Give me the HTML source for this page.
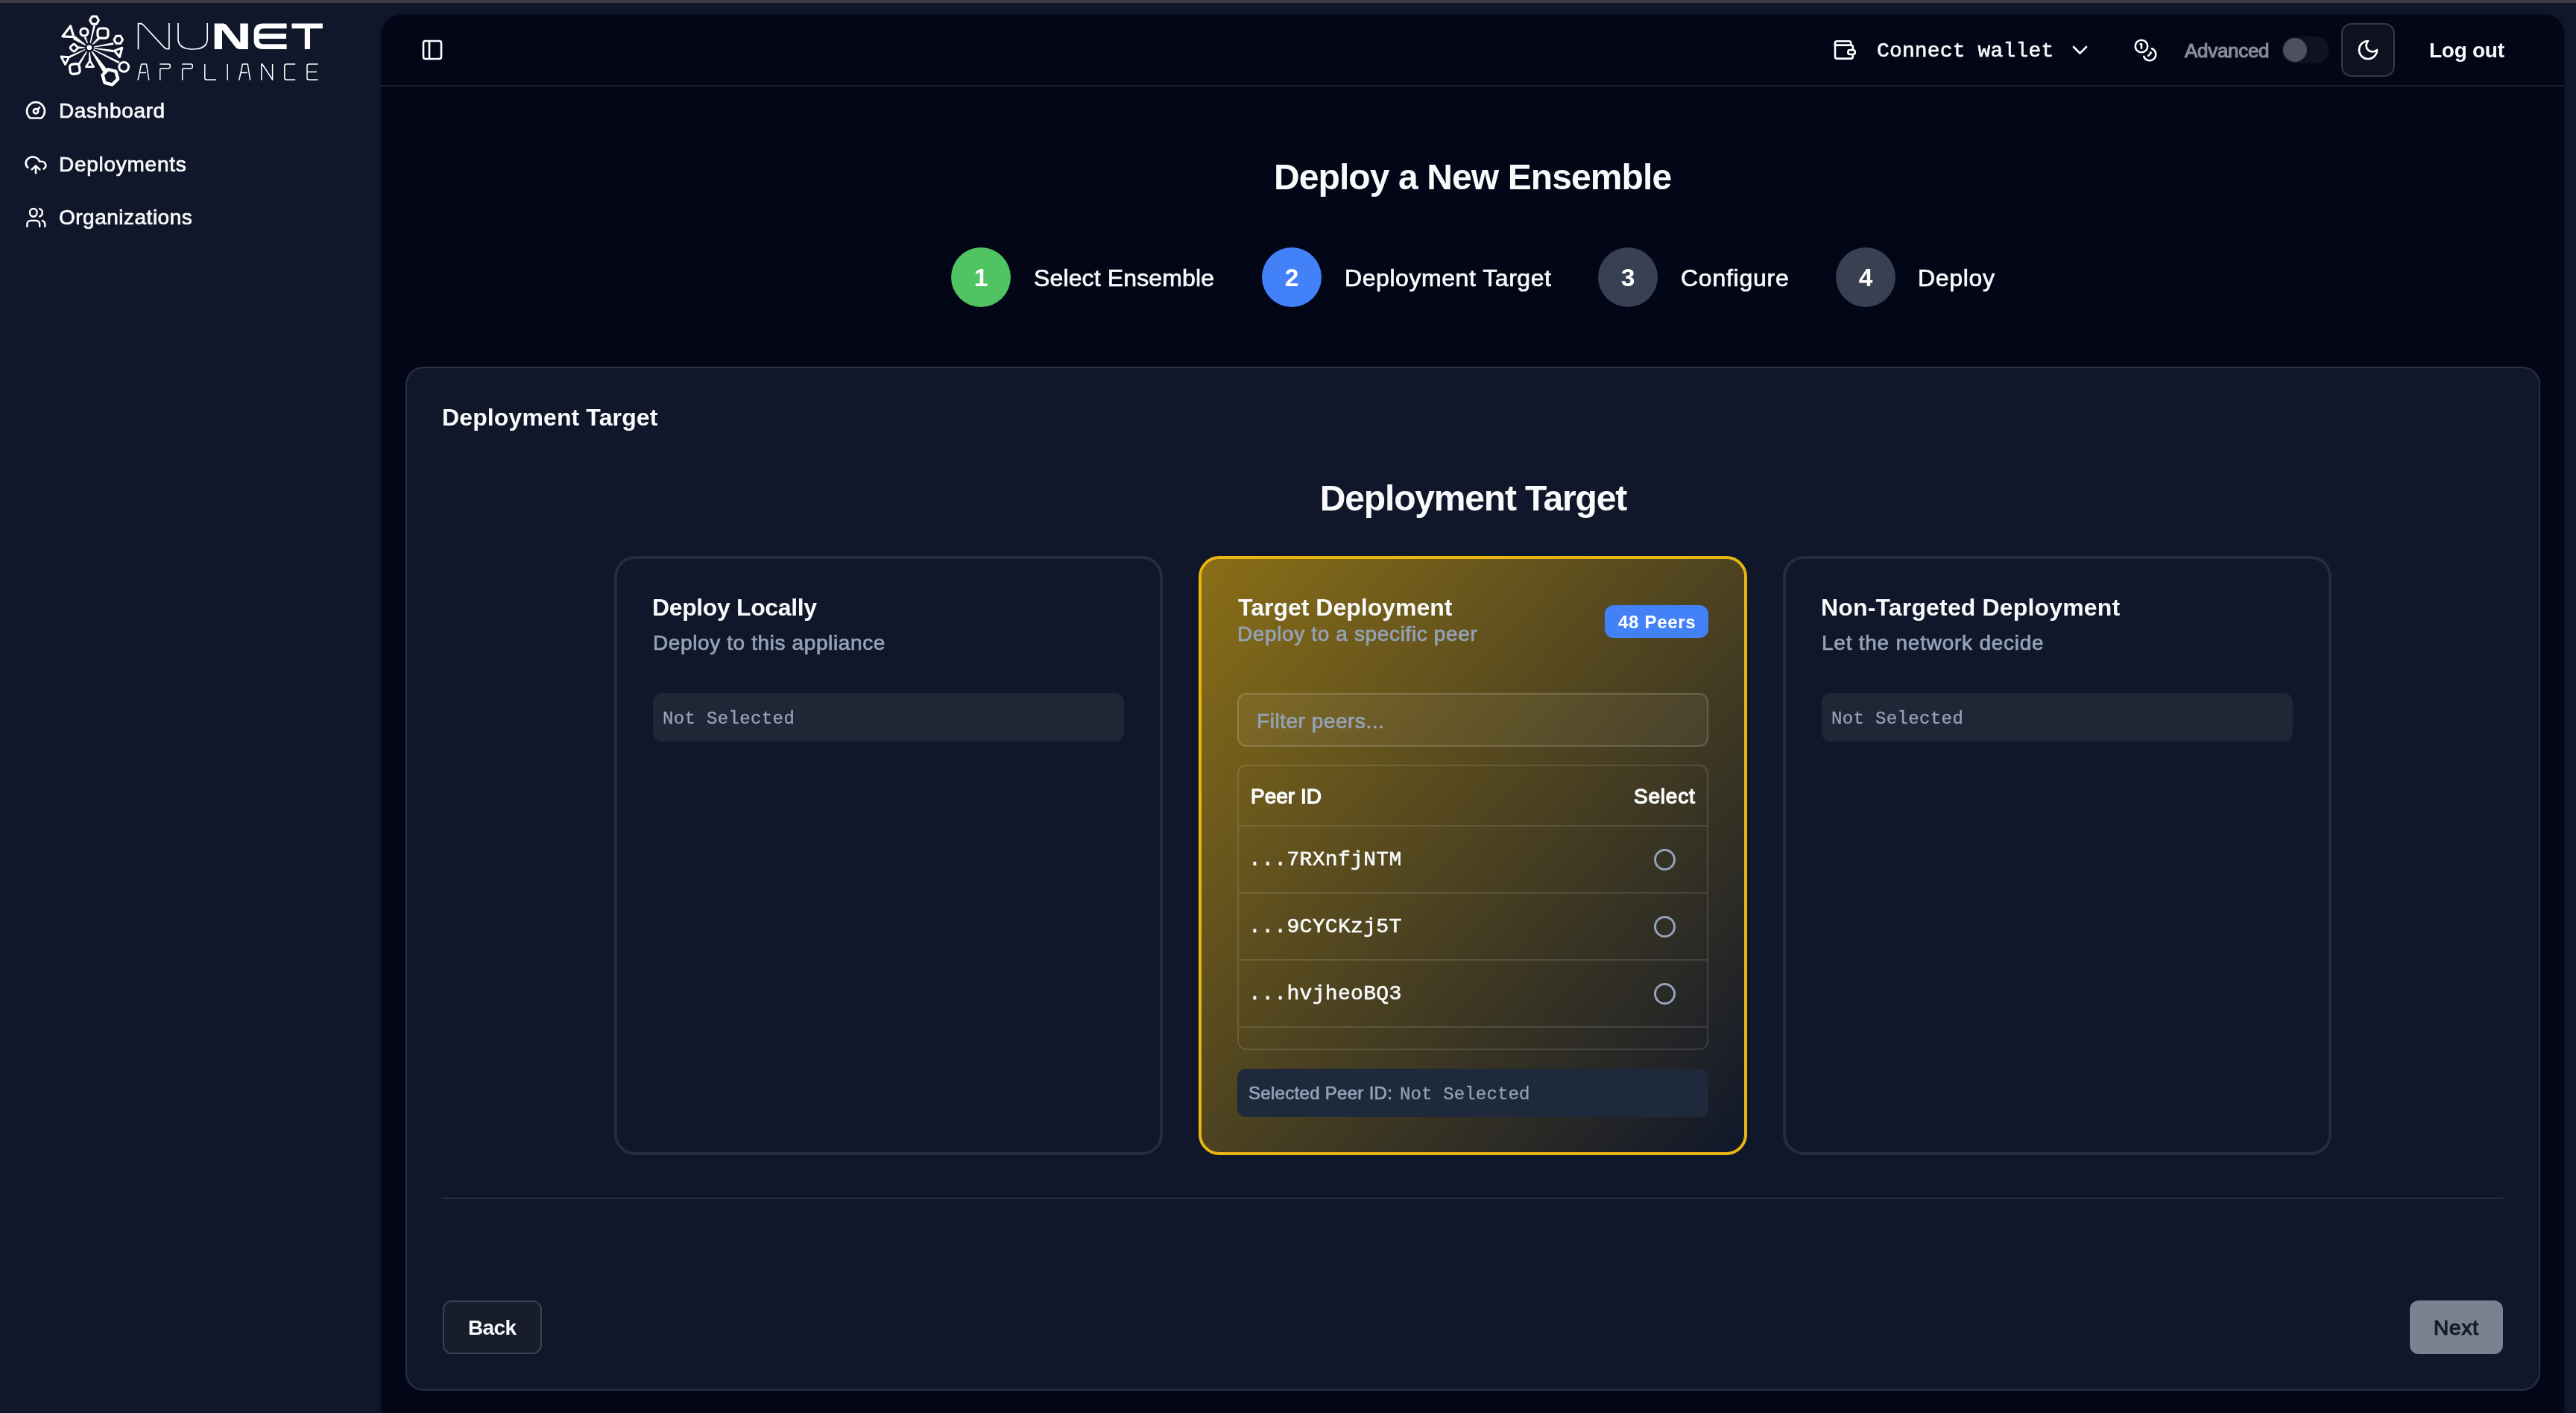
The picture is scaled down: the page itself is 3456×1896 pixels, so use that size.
<!DOCTYPE html>
<html>
<head>
<meta charset="utf-8">
<style>
*{box-sizing:border-box;margin:0;padding:0}
html,body{width:3456px;height:1896px;overflow:hidden;background:#10172a;font-family:"Liberation Sans",sans-serif;color:#f9fafb}
.b{position:absolute}
.t{position:absolute;white-space:nowrap;line-height:1;will-change:transform}
.s{position:absolute;overflow:visible}
</style>
</head>
<body>
<div class="b" style="left:0px;top:0px;width:3456px;height:4px;background:#3d3947"></div>
<svg class="s" style="left:0;top:0" width="460" height="130" viewBox="0 0 460 130">

 <g fill="none" stroke="#fff" stroke-linejoin="round" stroke-linecap="round">
  <path d="M132.40 27.20 L129.45 32.31 L123.55 32.31 L120.60 27.20 L123.55 22.09 L129.45 22.09 Z" stroke-width="3"/>
  <circle cx="112.9" cy="43" r="5.1" stroke-width="3"/>
  <rect x="131" y="38" width="14" height="13.2" rx="4" stroke-width="3.2"/>
  <path d="M164.60 53.30 L161.70 58.32 L155.90 58.32 L153.00 53.30 L155.90 48.28 L161.70 48.28 Z" stroke-width="3"/>
  <rect x="95" y="60" width="8.2" height="8.2" rx="2.6" transform="rotate(45 99.1 64.1)" stroke-width="2.8"/>
  <rect x="93.8" y="86" width="13" height="13" rx="3.8" transform="rotate(-8 100.3 92.5)" stroke-width="3.2"/>
  <circle cx="166.2" cy="89.8" r="6.4" stroke-width="3"/>
  <path d="M158.14 106.04 L150.64 113.54 L140.40 110.80 L137.66 100.56 L145.16 93.06 L155.40 95.80 Z" stroke-width="4.4"/>
  <path d="M94.6 35 L84 48.8 L99 49.6 Z" stroke-width="3.2"/>
  <path d="M163.8 64.2 L153.5 68.2 L160.5 76.5 Z" stroke-width="3"/>
  <path d="M82 76 L92.5 76.6 L87.6 86.5 Z" stroke-width="2.8"/>
  <path d="M120.6 81.5 L115.3 89.6 L125.8 89.6 Z" stroke-width="2.6"/>
 </g>
 <g fill="#fff">
  <circle cx="119.8" cy="63.8" r="3.4"/>
  <path d="M125.44 33.09 L120.51 57.60 L121.87 57.92 L128.16 33.71 Z"/><path d="M97.99 52.80 L114.18 61.07 L115.05 59.73 L101.01 48.20 Z"/><path d="M112.60 50.11 L116.79 58.34 L117.99 57.84 L115.00 49.09 Z"/><path d="M131.25 50.21 L123.73 58.95 L124.78 60.03 L133.75 52.79 Z"/><path d="M151.96 57.12 L125.82 62.18 L126.02 63.46 L152.44 60.08 Z"/><path d="M104.50 65.40 L113.60 64.45 L113.60 63.15 L104.50 62.20 Z"/><path d="M152.73 67.02 L126.03 64.06 L125.84 65.34 L152.27 70.18 Z"/><path d="M93.60 77.86 L114.49 67.06 L113.93 65.89 L92.40 75.34 Z"/><path d="M107.36 86.84 L117.12 69.44 L115.93 68.70 L104.64 85.16 Z"/><path d="M122.30 82.43 L120.76 69.96 L119.37 70.02 L118.90 82.57 Z"/><path d="M143.69 93.17 L124.03 68.42 L122.54 69.43 L138.31 96.83 Z"/><path d="M160.48 82.66 L125.63 66.01 L125.04 67.18 L159.12 85.34 Z"/>
 </g>
<g fill="none" stroke="#fff" stroke-width="1.7" stroke-linejoin="round">
 <path d="M185.5 66.2 V31.6 H188.5 Q190.5 31.6 192.5 33.8 L219.5 62.8 Q222 65.6 224.5 65.6 H226.9 V31"/>
 <path d="M239 31 V52 Q239 66 258.6 66 Q278.2 66 278.2 52 V31"/>
 <g stroke-width="1.5">
  <path d="M185 107.5 L189.7 86 H196.5 L199.8 107.5 M188 97.6 H196"/>
  <path d="M320.8 107.5 L325.5 86 H332.3 L335.6 107.5 M323.8 97.6 H331.8"/>
  <path d="M214.8 107.5 V93.5 Q214.8 91.8 216.8 91.8 H226 Q228.3 91.8 228.3 89.5 V88 Q228.3 86 226 86 H214.3"/>
  <path d="M244.7 107.5 V93.5 Q244.7 91.8 246.7 91.8 H256 Q258.3 91.8 258.3 89.5 V88 Q258.3 86 256 86 H244.2"/>
  <path d="M274.8 86 V104.8 Q274.8 107 277 107 H289.8"/>
  <path d="M305.2 86 V107.5"/>
  <path d="M350.8 107.5 V86 H351.8 L365.6 107 V86"/>
  <path d="M396.2 86 H384.2 Q381.8 86 381.8 88.4 V104.8 Q381.8 107 384.2 107 H396.2"/>
  <path d="M426.6 86 H414.4 Q412 86 412 88.4 V104.8 Q412 107 414.4 107 H426.6 M412 96.6 H425"/>
 </g>
</g>
<g fill="#fff">
 <path d="M287.7 66 V31.5 H299.5 Q302.5 31.5 304.8 34.5 L322.3 57.5 V31.5 H332.8 V66 H321 Q318 66 315.7 63 L298 40 V66 Z"/>
 <path d="M384.6 31.5 H353 Q340.6 31.5 340.6 43.5 V54 Q340.6 66 353 66 H384.6 V59.3 H354 Q347.5 59.3 347.5 53 V52 H384 V45.2 H347.5 V44.5 Q347.5 38.3 354 38.3 H384.6 Z"/>
 <path d="M391.5 31.5 H432.9 V38.3 H416 V66 H408.8 V38.3 H391.5 Z"/>
</g>
</svg>
<svg class="s" style="left:0;top:0" width="80" height="200" viewBox="0 0 80 200" fill="none" stroke="#fff" stroke-width="2.7" stroke-linecap="round" stroke-linejoin="round"><path d="M55.3 158.5 A11.9 11.9 0 1 0 40.7 158.5 Z"/><circle cx="48" cy="149.2" r="3.1"/><path d="M50.3 146.9 L53 144.2"/></svg>
<svg class="s" style="left:32px;top:207.2px" width="32" height="28.8" viewBox="0 0 24 24" preserveAspectRatio="none" fill="none" stroke="#fff" stroke-width="2" stroke-linecap="round" stroke-linejoin="round"><path d="M12 13v8"/><path d="M4 14.899A7 7 0 1 1 15.71 8h1.79a4.5 4.5 0 0 1 2.5 8.242"/><path d="m8 17 4-4 4 4"/></svg>
<svg class="s" style="left:33.5px;top:276px" width="28.8" height="32" viewBox="0 0 24 24" preserveAspectRatio="none" fill="none" stroke="#fff" stroke-width="2" stroke-linecap="round" stroke-linejoin="round"><path d="M16 21v-2a4 4 0 0 0-4-4H6a4 4 0 0 0-4 4v2"/><circle cx="9" cy="7" r="4"/><path d="M22 21v-2a4 4 0 0 0-3-3.87"/><path d="M16 3.13a4 4 0 0 1 0 7.75"/></svg>
<div class="t" style="left:79.0px;top:133.2px;font:400 28px 'Liberation Sans',sans-serif;color:#f9fafb;letter-spacing:0.65px;-webkit-text-stroke:0.7px #f9fafb;">Dashboard</div>
<div class="t" style="left:79.0px;top:204.8px;font:400 28px 'Liberation Sans',sans-serif;color:#f9fafb;letter-spacing:0.73px;-webkit-text-stroke:0.7px #f9fafb;">Deployments</div>
<div class="t" style="left:79.0px;top:276.2px;font:400 28px 'Liberation Sans',sans-serif;color:#f9fafb;letter-spacing:0.5px;-webkit-text-stroke:0.7px #f9fafb;">Organizations</div>
<div class="b" style="left:512px;top:20px;width:2928px;height:1900px;background:#020617;border-radius:26px 26px 0 0;box-shadow:0 0 4px rgba(0,0,0,.5)"></div>
<div class="b" style="left:512px;top:114px;width:2928px;height:2px;background:#1e2230"></div>
<svg class="s" style="left:564px;top:51px" width="32" height="32" viewBox="0 0 24 24" fill="none" stroke="#fff" stroke-width="2" stroke-linecap="round" stroke-linejoin="round"><rect width="18" height="18" x="3" y="3" rx="2"/><path d="M9 3v18"/></svg>
<svg class="s" style="left:0;top:0" width="3456" height="120" viewBox="0 0 3456 120"><g fill="none" stroke="#fff" stroke-width="2.6" stroke-linejoin="round" stroke-linecap="round">
<path d="M2462 60.6 V57.5 Q2462 55.2 2464.5 55.2 H2480.8 Q2483.2 55.2 2483.2 57.5 V60.6"/>
<path d="M2462 58 V76 Q2462 78.6 2464.5 78.6 H2483.3 Q2485.8 78.6 2485.8 76 V73 M2485.8 67 V63 Q2485.8 60.6 2483.3 60.6 H2462"/>
<path d="M2482 67 H2486 Q2488.8 67 2488.8 70 Q2488.8 73 2486 73 H2482 Q2479.3 73 2479.3 70 Q2479.3 67 2482 67 Z"/>
<path d="M2782 63 L2790.5 71.5 L2799 63"/>
</g></svg>
<div class="t" style="left:2517.5px;top:52.5px;font:400 28px 'Liberation Mono',monospace;color:#f9fafb;letter-spacing:0.15px;-webkit-text-stroke:0.6px #f9fafb;">Connect wallet</div>
<svg class="s" style="left:2861.5px;top:50.5px" width="33" height="33" viewBox="0 0 24 24" fill="none" stroke="#fff" stroke-width="1.9" stroke-linecap="round" stroke-linejoin="round"><circle cx="8" cy="8" r="6"/><path d="M18.09 10.37A6 6 0 1 1 10.34 18"/><path d="M7 6h1v4"/><path d="m16.71 13.88.7.71-2.82 2.82"/></svg>
<div class="t" style="left:2930.5px;top:52.6px;font:400 26px 'Liberation Sans',sans-serif;color:#8a8d99;letter-spacing:-0.3px;-webkit-text-stroke:1.1px #8a8d99;">Advanced</div>
<div class="b" style="left:3061px;top:49px;width:64px;height:36px;background:#0f1220;border-radius:18px"></div>
<div class="b" style="left:3063px;top:51px;width:32px;height:32px;background:#4d505e;border-radius:50%"></div>
<div class="b" style="left:3141px;top:31px;width:72px;height:72px;background:#0e1120;border:2px solid #353945;border-radius:14px"></div>
<svg class="s" style="left:3161px;top:51px" width="32" height="32" viewBox="0 0 24 24" fill="none" stroke="#fff" stroke-width="2" stroke-linecap="round" stroke-linejoin="round"><path d="M12 3a6 6 0 0 0 9 9 9 9 0 1 1-9-9Z"/></svg>
<div class="t" style="left:3259.0px;top:51.8px;font:700 28px 'Liberation Sans',sans-serif;color:#f9fafb;letter-spacing:-0.27px;-webkit-text-stroke:0px #f9fafb;">Log out</div>
<div class="t" style="left:976.0px;width:2000px;text-align:center;top:210.2px;font:700 48px 'Liberation Sans',sans-serif;color:#f9fafb;letter-spacing:-0.9px;text-indent:-0.9px;-webkit-text-stroke:0px #f9fafb">Deploy a New Ensemble</div>
<div class="b" style="left:1276px;top:332px;width:80px;height:80px;background:#50c462;border-radius:50%"></div>
<div class="t" style="left:316.0px;width:2000px;text-align:center;top:354.4px;font:700 33.5px 'Liberation Sans',sans-serif;color:#fff;letter-spacing:0px;text-indent:0px;-webkit-text-stroke:0px #fff">1</div>
<div class="t" style="left:1387.0px;top:355.2px;font:400 32px 'Liberation Sans',sans-serif;color:#f9fafb;letter-spacing:0.14px;-webkit-text-stroke:0.7px #f9fafb;">Select Ensemble</div>
<div class="b" style="left:1693px;top:332px;width:80px;height:80px;background:#4381f8;border-radius:50%"></div>
<div class="t" style="left:733.0px;width:2000px;text-align:center;top:354.4px;font:700 33.5px 'Liberation Sans',sans-serif;color:#fff;letter-spacing:0px;text-indent:0px;-webkit-text-stroke:0px #fff">2</div>
<div class="t" style="left:1803.5px;top:355.2px;font:400 32px 'Liberation Sans',sans-serif;color:#f9fafb;letter-spacing:0.56px;-webkit-text-stroke:0.7px #f9fafb;">Deployment Target</div>
<div class="b" style="left:2144px;top:332px;width:80px;height:80px;background:#374151;border-radius:50%"></div>
<div class="t" style="left:1184.0px;width:2000px;text-align:center;top:354.4px;font:700 33.5px 'Liberation Sans',sans-serif;color:#fff;letter-spacing:0px;text-indent:0px;-webkit-text-stroke:0px #fff">3</div>
<div class="t" style="left:2255.0px;top:355.2px;font:400 32px 'Liberation Sans',sans-serif;color:#f9fafb;letter-spacing:0.75px;-webkit-text-stroke:0.7px #f9fafb;">Configure</div>
<div class="b" style="left:2463px;top:332px;width:80px;height:80px;background:#374151;border-radius:50%"></div>
<div class="t" style="left:1503.0px;width:2000px;text-align:center;top:354.4px;font:700 33.5px 'Liberation Sans',sans-serif;color:#fff;letter-spacing:0px;text-indent:0px;-webkit-text-stroke:0px #fff">4</div>
<div class="t" style="left:2573.0px;top:355.2px;font:400 32px 'Liberation Sans',sans-serif;color:#f9fafb;letter-spacing:0.7px;-webkit-text-stroke:0.7px #f9fafb;">Deploy</div>
<div class="b" style="left:544px;top:492px;width:2864px;height:1374px;background:#10172a;border:2px solid #2a3042;border-radius:24px"></div>
<div class="t" style="left:593.0px;top:541.7px;font:700 32px 'Liberation Sans',sans-serif;color:#f9fafb;letter-spacing:0.12px;-webkit-text-stroke:0px #f9fafb;">Deployment Target</div>
<div class="t" style="left:976.5px;width:2000px;text-align:center;top:641.0px;font:700 48px 'Liberation Sans',sans-serif;color:#f9fafb;letter-spacing:-1.18px;text-indent:-1.18px;-webkit-text-stroke:0px #f9fafb">Deployment Target</div>
<div class="b" style="left:824px;top:746px;width:736px;height:804px;border:4px solid #262c40;border-radius:28px"></div>
<div class="b" style="left:2392px;top:746px;width:736px;height:804px;border:4px solid #262c40;border-radius:28px"></div>
<div class="b" style="left:1608px;top:746px;width:736px;height:804px;border:4px solid #e9b611;border-radius:28px;background:linear-gradient(to bottom right, rgba(234,179,8,.56), rgba(234,179,8,0)) padding-box, #10172a"></div>
<div class="t" style="left:875.0px;top:797.2px;font:700 32px 'Liberation Sans',sans-serif;color:#f9fafb;letter-spacing:-0.37px;-webkit-text-stroke:0px #f9fafb;">Deploy Locally</div>
<div class="t" style="left:875.5px;top:846.6px;font:400 28px 'Liberation Sans',sans-serif;color:#94a3b8;letter-spacing:0.61px;-webkit-text-stroke:0.7px #94a3b8;">Deploy to this appliance</div>
<div class="b" style="left:876px;top:930px;width:632px;height:65px;background:#1f2737;border-radius:12px"></div>
<div class="t" style="left:889.0px;top:950.8px;font:400 24px 'Liberation Mono',monospace;color:#94a3b8;letter-spacing:0.36px;-webkit-text-stroke:0.3px #94a3b8;">Not Selected</div>
<div class="t" style="left:2443.0px;top:797.2px;font:700 32px 'Liberation Sans',sans-serif;color:#f9fafb;letter-spacing:0.16px;-webkit-text-stroke:0px #f9fafb;">Non-Targeted Deployment</div>
<div class="t" style="left:2443.5px;top:846.6px;font:400 28px 'Liberation Sans',sans-serif;color:#94a3b8;letter-spacing:0.76px;-webkit-text-stroke:0.7px #94a3b8;">Let the network decide</div>
<div class="b" style="left:2444px;top:930px;width:632px;height:65px;background:#1f2737;border-radius:12px"></div>
<div class="t" style="left:2457.0px;top:950.8px;font:400 24px 'Liberation Mono',monospace;color:#94a3b8;letter-spacing:0.36px;-webkit-text-stroke:0.3px #94a3b8;">Not Selected</div>
<div class="t" style="left:1661.0px;top:797.0px;font:700 32px 'Liberation Sans',sans-serif;color:#f9fafb;letter-spacing:0px;-webkit-text-stroke:0px #f9fafb;">Target Deployment</div>
<div class="t" style="left:1659.5px;top:834.8px;font:400 28px 'Liberation Sans',sans-serif;color:#94a3b8;letter-spacing:0.63px;-webkit-text-stroke:0.7px #94a3b8;">Deploy to a specific peer</div>
<div class="b" style="left:2153px;top:812px;width:139px;height:44px;background:#4381f8;border-radius:12px"></div>
<div class="t" style="left:2170.5px;top:821.4px;font:700 24px 'Liberation Sans',sans-serif;color:#fff;letter-spacing:0.69px;-webkit-text-stroke:0px #fff;">48 Peers</div>
<div class="b" style="left:1660px;top:930px;width:632px;height:72px;border:2px solid rgba(255,255,255,.16);background:rgba(255,255,255,.05);border-radius:12px"></div>
<div class="t" style="left:1685.5px;top:951.8px;font:400 28px 'Liberation Sans',sans-serif;color:#94a3b8;letter-spacing:0.53px;-webkit-text-stroke:0.7px #94a3b8;">Filter peers...</div>
<div class="b" style="left:1660px;top:1026px;width:632px;height:383px;border:2px solid rgba(255,255,255,.12);border-radius:12px"></div>
<div class="b" style="left:1662px;top:1107px;width:628px;height:2px;background:rgba(255,255,255,.12)"></div>
<div class="b" style="left:1662px;top:1197px;width:628px;height:2px;background:rgba(255,255,255,.12)"></div>
<div class="b" style="left:1662px;top:1287px;width:628px;height:2px;background:rgba(255,255,255,.12)"></div>
<div class="b" style="left:1662px;top:1377px;width:628px;height:2px;background:rgba(255,255,255,.12)"></div>
<div class="t" style="left:1678.0px;top:1052.8px;font:400 28px 'Liberation Sans',sans-serif;color:#f9fafb;letter-spacing:0px;-webkit-text-stroke:1.3px #f9fafb;">Peer ID</div>
<div class="t" style="right:1182.6px;top:1053.0px;font:400 28px 'Liberation Sans',sans-serif;color:#f9fafb;letter-spacing:0.8px;margin-right:-0.8px;-webkit-text-stroke:1.3px #f9fafb">Select</div>
<div class="t" style="left:1675.0px;top:1138.1px;font:400 28px 'Liberation Mono',monospace;color:#f9fafb;letter-spacing:0.33px;-webkit-text-stroke:0.6px #f9fafb;">...7RXnfjNTM</div>
<div class="b" style="left:2218.5px;top:1138.5px;width:29px;height:29px;border:3.5px solid #94a3b8;border-radius:50%"></div>
<div class="t" style="left:1675.0px;top:1228.1px;font:400 28px 'Liberation Mono',monospace;color:#f9fafb;letter-spacing:0.33px;-webkit-text-stroke:0.6px #f9fafb;">...9CYCKzj5T</div>
<div class="b" style="left:2218.5px;top:1228.5px;width:29px;height:29px;border:3.5px solid #94a3b8;border-radius:50%"></div>
<div class="t" style="left:1675.0px;top:1318.1px;font:400 28px 'Liberation Mono',monospace;color:#f9fafb;letter-spacing:0.33px;-webkit-text-stroke:0.6px #f9fafb;">...hvjheoBQ3</div>
<div class="b" style="left:2218.5px;top:1318.5px;width:29px;height:29px;border:3.5px solid #94a3b8;border-radius:50%"></div>
<div class="b" style="left:1660px;top:1434px;width:632px;height:65px;background:#1e293b;border-radius:12px"></div>
<div class="t" style="left:1675.0px;top:1453.3px;font:400 24px 'Liberation Sans',sans-serif;color:#94a3b8;letter-spacing:0.3px;-webkit-text-stroke:0.7px #94a3b8;">Selected Peer ID:</div>
<div class="t" style="left:1878.0px;top:1454.7px;font:400 24px 'Liberation Mono',monospace;color:#94a3b8;letter-spacing:0.15px;-webkit-text-stroke:0.3px #94a3b8;">Not Selected</div>
<div class="b" style="left:594px;top:1607px;width:2764px;height:2px;background:#2a3042"></div>
<div class="b" style="left:594px;top:1745px;width:133px;height:72px;background:#181d2b;border:2px solid #394050;border-radius:12px"></div>
<div class="t" style="left:627.5px;top:1766.0px;font:700 28px 'Liberation Sans',sans-serif;color:#f9fafb;letter-spacing:-0.63px;-webkit-text-stroke:0px #f9fafb;">Back</div>
<div class="b" style="left:3233px;top:1745px;width:125px;height:72px;background:#7b818f;border-radius:12px"></div>
<div class="t" style="left:3264.5px;top:1766.0px;font:400 28px 'Liberation Sans',sans-serif;color:#141a2b;letter-spacing:0.85px;-webkit-text-stroke:1.2px #141a2b;">Next</div>
</body>
</html>
